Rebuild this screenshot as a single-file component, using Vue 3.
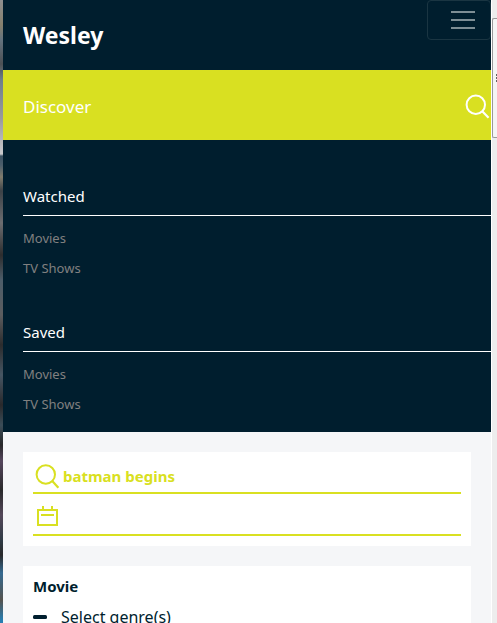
<script setup>
import { ref } from 'vue'

const title = ref('batman begins')
const year = ref('')
const groups = [
  { name: 'Watched', links: ['Movies', 'TV Shows'] },
  { name: 'Saved', links: ['Movies', 'TV Shows'] },
]
</script>

<template>
  <div class="desktop">
    <div class="wallpaper"></div>
    <div class="page">
      <nav class="sidebar">
        <header class="brand">
          <a class="name" href="#">Wesley</a>
          <button class="toggler" type="button" aria-label="Toggle navigation">
            <svg width="24" height="18" viewBox="0 0 24 18" aria-hidden="true">
              <path d="M0 1h24M0 9h24M0 17h24" fill="none" stroke="#7e8e95" stroke-width="2" />
            </svg>
          </button>
        </header>
        <a class="discover" href="#">
          <span>Discover</span>
          <svg width="26" height="26" viewBox="0 0 26 26" aria-hidden="true">
            <circle cx="10.8" cy="11.7" r="9.2" fill="none" stroke="currentColor" stroke-width="2" />
            <path d="M17 18L23.6 24.8" fill="none" stroke="currentColor" stroke-width="2.2" />
          </svg>
        </a>
        <div class="groups">
          <section v-for="group in groups" :key="group.name" class="group">
            <h2>{{ group.name }}</h2>
            <ul>
              <li v-for="link in group.links" :key="link"><a href="#">{{ link }}</a></li>
            </ul>
          </section>
        </div>
      </nav>
      <main class="content">
        <form class="card" @submit.prevent>
          <div class="field">
            <label for="title" aria-label="Title">
              <svg width="28" height="28" viewBox="0 0 28 28" aria-hidden="true">
                <circle cx="12.8" cy="13.5" r="9.2" fill="none" stroke="currentColor" stroke-width="2" />
                <path d="M19 19.8L25.4 26.8" fill="none" stroke="currentColor" stroke-width="2.2" />
              </svg>
            </label>
            <input id="title" v-model="title" type="text" />
          </div>
          <div class="field">
            <label for="year" aria-label="Year">
              <svg width="28" height="28" viewBox="0 0 28 28" aria-hidden="true">
                <path d="M5 7H24V22H5ZM10 3V7M19 3V7M8 12H21" fill="none" stroke="currentColor" stroke-width="2" />
              </svg>
            </label>
            <input id="year" v-model="year" type="text" />
          </div>
        </form>
        <section class="card filters">
          <h3>Movie</h3>
          <button class="genres" type="button">
            <svg width="14" height="4" viewBox="0 0 14 4" aria-hidden="true">
              <rect width="14" height="4" rx="1.5" fill="currentColor" />
            </svg>
            <span>Select genre(s)</span>
          </button>
        </section>
      </main>
    </div>
    <div class="scroller">
      <div class="thumb">
        <svg width="1" height="8" viewBox="0 0 1 8" aria-hidden="true">
          <path d="M0 1h1M0 4h1M0 7h1" stroke="#333333" stroke-width="1.6" />
        </svg>
      </div>
    </div>
  </div>
</template>

<style>
body {
  margin: 0;
}
</style>

<style scoped>
* {
  box-sizing: border-box;
}

.desktop {
  display: flex;
  height: 100vh;
  overflow: hidden;
  font-family: "Noto Sans", "Open Sans", sans-serif;
  color: #001e2e;
}

.wallpaper {
  flex: 0 0 3px;
  background: linear-gradient(#8f8f8f 0, #85806d 25px, #64737e 40px, #4c5054 64px, #6e7f8b 80px, #9a9a9f 119px, #c8c9cb 154px, #3d5363 156px, #4b5e6b 165px, #807c6d 177px, #3c4247 191px, #6c6d70 223px, #2d2d2e 255px, #4d5d69 280px, #5c5d5f 315px, #2c2c2d 345px, #465663 375px, #29292b 405px, #3b4d58 425px, #28282a 445px, #55465d 461px, #29292b 490px, #54485a 515px, #303b46 540px, #29292b 555px, #356a91 573px, #55534f 600px, #287db1 620px);
}

.page {
  flex: 1;
  min-width: 0;
  background: #f5f6f8;
}

a {
  color: inherit;
  text-decoration: none;
}

h2,
h3,
ul {
  margin: 0;
  padding: 0;
  list-style: none;
}

.sidebar {
  background: #001e2e;
  color: #ffffff;
}

.brand {
  display: flex;
  justify-content: space-between;
  align-items: flex-start;
  height: 70px;
  padding-left: 20px;
}

.name {
  font-size: 23px;
  font-weight: 700;
  line-height: 70px;
}

.toggler {
  display: flex;
  align-items: center;
  justify-content: flex-end;
  width: 64px;
  height: 40px;
  padding: 0 15px;
  border: 1px solid #1a3542;
  border-radius: 4px;
  background: none;
}

.discover {
  display: flex;
  align-items: center;
  justify-content: space-between;
  height: 70px;
  padding: 2px 0 0 20px;
  background: #d9e021;
  font-size: 17px;
}

.groups {
  padding: 8px 0 12px;
}

.group {
  padding: 32px 0 0 20px;
}

.group h2 {
  height: 36px;
  border-bottom: 1px solid #ffffff;
  font-size: 15px;
  font-weight: 400;
  line-height: 32px;
}

.group ul {
  padding-top: 8px;
}

.group li {
  height: 30px;
  color: #808080;
  font-size: 13px;
  line-height: 28px;
}

.content {
  display: flex;
  flex-direction: column;
  gap: 20px;
  padding: 20px;
}

.card {
  padding: 0 10px 10px;
  background: #ffffff;
}

.field {
  display: flex;
  align-items: center;
  height: 42px;
  padding-top: 6px;
  border-bottom: 2px solid #d9e021;
  color: #d9e021;
}

.field label {
  display: flex;
}

.field input {
  flex: 1;
  min-width: 0;
  padding: 2px 2px 0;
  border: 0;
  outline: 0;
  background: none;
  color: inherit;
  font: 700 15px/24px "Noto Sans", "Open Sans", sans-serif;
}

.filters {
  padding-top: 8px;
}

.filters h3 {
  font-size: 15px;
  line-height: 24px;
}

.genres {
  display: flex;
  align-items: center;
  gap: 14px;
  padding: 6px 0;
  border: 0;
  background: none;
  color: inherit;
  font: 400 16px/26px "Noto Sans", "Open Sans", sans-serif;
}

.scroller {
  flex: 0 0 6px;
  padding-top: 18px;
  border-left: 1px solid #ffffff;
  background: #ededed;
}

.thumb {
  display: flex;
  align-items: center;
  justify-content: flex-end;
  height: 120px;
  border: 1px solid #999999;
  border-right: 0;
  border-radius: 2px 0 0 2px;
  background: #f5f5f5;
}
</style>
